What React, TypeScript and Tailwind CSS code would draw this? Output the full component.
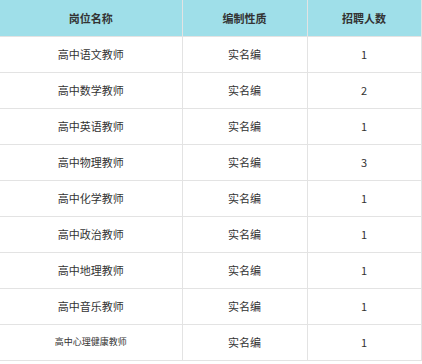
import React from "react";

const rows: [string, string, string, boolean?][] = [
  ["高中语文教师", "实名编", "1"],
  ["高中数学教师", "实名编", "2"],
  ["高中英语教师", "实名编", "1"],
  ["高中物理教师", "实名编", "3"],
  ["高中化学教师", "实名编", "1"],
  ["高中政治教师", "实名编", "1"],
  ["高中地理教师", "实名编", "1"],
  ["高中音乐教师", "实名编", "1"],
  ["高中心理健康教师", "实名编", "1", true],
];

export default function App() {
  return (
    <div className="w-[422px] h-[364px] bg-white overflow-hidden" style={{ fontFamily: '"Noto Sans CJK SC", "Noto Sans", sans-serif' }}>
      <table className="w-[421px] border-collapse table-fixed text-[#333] text-[11px]">
        <colgroup>
          <col className="w-[182px]" />
          <col className="w-[125px]" />
          <col className="w-[114px]" />
        </colgroup>
        <thead>
          <tr className="h-[36px] bg-[#9fdfe9]">
            <th className="border border-[#e3e3e3] border-l-0 border-t-0 font-bold text-center">岗位名称</th>
            <th className="border border-[#e3e3e3] border-t-0 font-bold text-center">编制性质</th>
            <th className="border border-[#e3e3e3] border-t-0 font-bold text-center">招聘人数</th>
          </tr>
        </thead>
        <tbody>
          {rows.map(([a, b, c, small], i) => (
            <tr key={i} className="h-[36px]">
              <td className={`border border-[#e3e3e3] border-l-0 text-center ${small ? "text-[9px]" : ""}`}>{a}</td>
              <td className="border border-[#e3e3e3] text-center">{b}</td>
              <td className="border border-[#e3e3e3] text-center">{c}</td>
            </tr>
          ))}
        </tbody>
      </table>
    </div>
  );
}
